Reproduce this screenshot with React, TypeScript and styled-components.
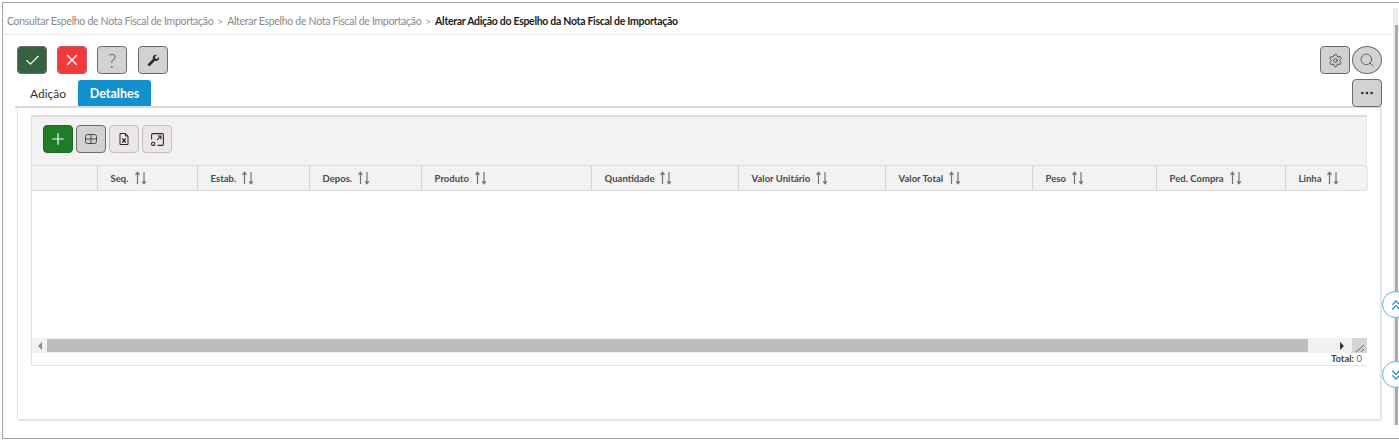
import React from "react";
import styled, { createGlobalStyle } from "styled-components";
import { Check, ChevronsDown, ChevronsUp, Ellipsis, Plus, Search, Settings, X } from "lucide-react";

const GlobalStyle = createGlobalStyle`
    html, body {
        margin: 0;
        padding: 0;
        background: #fff;
        overflow: hidden;
    }
    * {
        box-sizing: border-box;
    }
`;

interface Column {
    label: string;
    width: number;
}

const columns: Column[] = [
    { label: "", width: 66 },
    { label: "Seq.", width: 100 },
    { label: "Estab.", width: 112 },
    { label: "Depos.", width: 112 },
    { label: "Produto", width: 170 },
    { label: "Quantidade", width: 147 },
    { label: "Valor Unitário", width: 147 },
    { label: "Valor Total", width: 147 },
    { label: "Peso", width: 124 },
    { label: "Ped. Compra", width: 129 },
    { label: "Linha", width: 82 },
];

const SortIcon = () => (
    <svg width="13" height="14" viewBox="0 0 13 14" fill="none" stroke="#6f7378" strokeWidth="1.2">
        <path d="M3.500 13V1.500M1.500 3.800L3.500 1.200L5.500 3.800" />
        <path d="M10 1V12.500M8.200 10.300L10 12.800L11.800 10.300" />
    </svg>
);

const WrenchIcon = () => (
    <svg width="13" height="13" viewBox="0 0 14 14" fill="#2f2f2f">
        <path d="M12.800 3.200L10.600 5.300L8.900 4.900L8.500 3.300L10.700 1.100C9.200 .6 7.600 1 6.800 2.100C6.100 3 6 4.200 6.400 5.300L1.300 10.500C.7 11.100 .7 12 1.300 12.600C1.900 13.200 2.800 13.200 3.400 12.600L8.500 7.400C9.700 7.900 11 7.700 12 6.800C12.900 5.900 13.200 4.500 12.800 3.200Z" />
    </svg>
);

const GridIcon = () => (
    <svg width="14" height="14" viewBox="0 0 14 14" fill="none" stroke="#4a4a4a" strokeWidth="1">
        <rect x="1.500" y="2.500" width="11" height="9" rx="2" />
        <path d="M7 2.500V11.500M1.500 7H12.500" />
    </svg>
);

const ExcelIcon = () => (
    <svg width="14" height="14" viewBox="0 0 14 14" fill="none" stroke="#2a2a2a" strokeWidth="1">
        <path d="M3 1.500H8.500L11 4V12.500H3Z" />
        <path d="M8.500 1.500V4H11" />
        <path d="M5.300 6.500L8.700 10.500M8.700 6.500L5.300 10.500" strokeWidth="1.200" />
    </svg>
);

const ExpandIcon = () => (
    <svg width="15" height="15" viewBox="0 0 14 14" fill="none" stroke="#2a2a2a" strokeWidth="1">
        <path d="M1.500 7V2.500C1.500 1.900 1.900 1.500 2.500 1.500H11.500C12.100 1.500 12.500 1.900 12.500 2.500V11.500C12.500 12.100 12.100 12.500 11.500 12.500H7" />
        <path d="M6.500 7.500L10 4M7.300 3.800H10.200V6.700" />
        <rect x="1.500" y="9.500" width="3" height="3" rx="1" />
    </svg>
);

const App: React.FC = () => {
    return (
        <>
            <GlobalStyle />
            <Frame>
                <Breadcrumb>
                    <Crumb>Consultar Espelho de Nota Fiscal de Importação</Crumb>
                    <Separator>&gt;</Separator>
                    <Crumb>Alterar Espelho de Nota Fiscal de Importação</Crumb>
                    <Separator>&gt;</Separator>
                    <Crumb $current>Alterar Adição do Espelho da Nota Fiscal de Importação</Crumb>
                </Breadcrumb>
                <Content>
                    <ActionBar>
                        <ActionGroup>
                            <ActionButton $variant="confirm"><Check size={17} strokeWidth={1.6} /></ActionButton>
                            <ActionButton $variant="cancel"><X size={18} strokeWidth={1.8} /></ActionButton>
                            <ActionButton><HelpMark>?</HelpMark></ActionButton>
                            <WrenchButton><WrenchIcon /></WrenchButton>
                        </ActionGroup>
                        <RightGroup>
                            <ActionButton><Settings size={15} strokeWidth={1.4} color="#3c3c3c" /></ActionButton>
                            <RoundButton><Search size={16} strokeWidth={1.3} color="#4a5560" /></RoundButton>
                        </RightGroup>
                    </ActionBar>
                    <TabRow>
                        <Tab>Adição</Tab>
                        <Tab $active>Detalhes</Tab>
                        <MoreButton><Ellipsis size={16} strokeWidth={2} color="#333" /></MoreButton>
                    </TabRow>
                    <Panel>
                        <GridCard>
                            <GridToolbar>
                                <ToolButton $variant="add"><Plus size={18} strokeWidth={1.6} /></ToolButton>
                                <ToolButton $variant="selected"><GridIcon /></ToolButton>
                                <ToolButton><ExcelIcon /></ToolButton>
                                <ToolButton><ExpandIcon /></ToolButton>
                            </GridToolbar>
                            <HeaderRow>
                                {columns.map((column, index) => (
                                    <HeaderCell key={index} $width={column.width}>
                                        {column.label && (
                                            <>
                                                <span>{column.label}</span>
                                                <SortIcon />
                                            </>
                                        )}
                                    </HeaderCell>
                                ))}
                            </HeaderRow>
                            <GridBody />
                            <HScroll>
                                <ScrollArrow><LeftTriangle /></ScrollArrow>
                                <ScrollThumb />
                                <ScrollArrow $end><RightTriangle /></ScrollArrow>
                                <ResizeCorner>
                                    <svg width="14" height="14" viewBox="0 0 14 14" stroke="#666" strokeWidth="1" fill="none">
                                        <path d="M4 12L12 5M9 12L12 9" />
                                    </svg>
                                </ResizeCorner>
                            </HScroll>
                            <GridFooter>
                                <strong>Total:</strong>&nbsp;0
                            </GridFooter>
                        </GridCard>
                    </Panel>
                </Content>
                <PageScroll>
                    <PageThumb />
                </PageScroll>
                <SideButton $top={288}><ChevronsUp size={16} strokeWidth={1.8} /></SideButton>
                <SideButton $top={358}><ChevronsDown size={16} strokeWidth={1.8} /></SideButton>
            </Frame>
        </>
    );
};

const Frame = styled.div`
    position: relative;
    margin: 2px 0 0 2px;
    height: 437px;
    width: 1397px;
    padding-right: 7px;
    border-top: 1px solid #a3a3a3;
    border-left: 1px solid #a3a3a3;
    border-bottom: 1px solid #a3a3a3;
    font-family: Lato, "Liberation Sans", sans-serif;
    overflow: hidden;
`;

const Breadcrumb = styled.div`
    display: flex;
    align-items: center;
    gap: 4px;
    height: 32px;
    padding: 5px 0 0 4px;
    border-bottom: 1px solid #e8e8e8;
`;

const Crumb = styled.span<{ $current?: boolean }>`
    font-size: 10.500px;
    letter-spacing: -0.300px;
    color: ${(p) => (p.$current ? "#1c1c1c" : "#8a8a8a")};
    font-weight: ${(p) => (p.$current ? 700 : 400)};
`;

const Separator = styled.span`
    font-size: 10px;
    color: #8a8a8a;
`;

const Content = styled.div`
    padding: 11px 11px 0 12px;
`;

const ActionBar = styled.div`
    display: flex;
    justify-content: space-between;
    padding: 0 0 0 2px;
    margin-right: -1px;
`;

const ActionGroup = styled.div`
    display: flex;
    gap: 10px;
`;

const RightGroup = styled.div`
    display: flex;
    gap: 2px;
`;

const ActionButton = styled.div<{ $variant?: "confirm" | "cancel" }>`
    display: flex;
    align-items: center;
    justify-content: center;
    width: 30px;
    height: 28px;
    border-radius: 4px;
    border: 1px solid ${(p) => (p.$variant === "cancel" ? "#c9585a" : "#6e6e6e")};
    color: #fff;
    background: ${(p) =>
        p.$variant === "confirm" ? "#35623e" : p.$variant === "cancel" ? "#f2393d" : "#d2d2d2"};
`;

const WrenchButton = styled(ActionButton)`
    margin-left: 1px;
`;

const HelpMark = styled.span`
    font-size: 19px;
    font-weight: 300;
    color: #5e5e5e;
    line-height: 1;
`;

const RoundButton = styled(ActionButton)`
    border-radius: 50%;
`;

const TabRow = styled.div`
    position: relative;
    display: flex;
    align-items: flex-end;
    height: 34px;
    margin-right: -1px;
    border-bottom: 2px solid #d9d9d9;
`;

const Tab = styled.div<{ $active?: boolean }>`
    display: flex;
    align-items: center;
    justify-content: center;
    height: 26px;
    margin-left: ${(p) => (p.$active ? "0" : "3px")};
    width: ${(p) => (p.$active ? "73px" : "60px")};
    font-size: ${(p) => (p.$active ? "12.500px" : "12px")};
    border-radius: 3px 3px 0 0;
    font-weight: ${(p) => (p.$active ? 700 : 400)};
    color: ${(p) => (p.$active ? "#fff" : "#333")};
    background: ${(p) => (p.$active ? "#1291cd" : "transparent")};
`;

const MoreButton = styled(ActionButton)`
    position: absolute;
    right: 0;
    top: 5px;
`;

const Panel = styled.div`
    height: 313px;
    padding: 7px 14px 0 13px;
    margin-left: 2px;
    margin-right: -1px;
    border: 1px solid #e4e4e4;
    border-top: none;
    border-radius: 0 0 3px 3px;
    border-width: 0 2px 2px 1px;
`;

const GridCard = styled.div`
    width: 1336px;
    height: 251px;
    border: 1px solid #e4e4e4;
    border-top: 2px solid #dcdcdc;
    border-right-width: 0;
    display: flex;
    flex-direction: column;
`;

const GridToolbar = styled.div`
    display: flex;
    align-items: center;
    gap: 3px;
    height: 49px;
    padding: 0 0 4px 11px;
    background: #f2f2f2;
    border-bottom: 1px solid #dcdcdc;
    border-right: 1px solid #e4e4e4;
`;

const ToolButton = styled.div<{ $variant?: "add" | "selected" }>`
    display: flex;
    align-items: center;
    justify-content: center;
    width: 30px;
    height: 28px;
    border-radius: 4px;
    color: #fff;
    border: 1px solid
        ${(p) => (p.$variant === "add" ? "#1f6b1f" : p.$variant === "selected" ? "#6e6e6e" : "#c4c0c0")};
    background: ${(p) =>
        p.$variant === "add" ? "#1f7d27" : p.$variant === "selected" ? "#d2d2d2" : "#ece6e6"};
`;

const HeaderRow = styled.div`
    display: flex;
    height: 25px;
    background: #f2f2f2;
    border-bottom: 1px solid #dcdcdc;
`;

const HeaderCell = styled.div<{ $width: number }>`
    display: flex;
    align-items: center;
    gap: 5px;
    flex: 0 0 ${(p) => p.$width}px;
    padding-left: 12.600px;
    border-right: 1px solid #d4d4d4;
    font-size: 9.500px;
    font-weight: 700;
    color: #4a4a4a;

    &:last-child {
        border-right: 1px solid #e4e4e4;
    }
`;

const GridBody = styled.div`
    flex: 1;
    background: #fff;
`;

const HScroll = styled.div`
    display: flex;
    align-items: center;
    height: 15px;
    background: #f1f1f1;
`;

const ScrollArrow = styled.div<{ $end?: boolean }>`
    display: flex;
    align-items: center;
    justify-content: center;
    flex: 0 0 ${(p) => (p.$end ? "44px" : "15px")};
    height: 15px;
    padding-left: ${(p) => (p.$end ? "23px" : "0")};
`;

const ScrollThumb = styled.div`
    flex: 1;
    height: 13px;
    background: #bdbdbd;
`;

const LeftTriangle = styled.div`
    width: 0;
    height: 0;
    border-top: 4px solid transparent;
    border-bottom: 4px solid transparent;
    border-right: 4px solid #8c8c8c;
`;

const RightTriangle = styled.div`
    width: 0;
    height: 0;
    border-top: 4px solid transparent;
    border-bottom: 4px solid transparent;
    border-left: 4px solid #333;
`;

const ResizeCorner = styled.div`
    flex: 0 0 15px;
    height: 15px;
    background: #d4d4d4;
`;

const GridFooter = styled.div`
    height: 12px;
    display: flex;
    align-items: center;
    justify-content: flex-end;
    padding-right: 5px;
    font-size: 9.500px;
    line-height: 12px;
    color: #666;

    strong {
        font-weight: 700;
        color: #444;
    }
`;

const SideButton = styled.div<{ $top: number }>`
    position: absolute;
    left: 1379px;
    top: ${(p) => p.$top}px;
    display: flex;
    align-items: center;
    padding-left: 5px;
    width: 27px;
    height: 27px;
    border-radius: 50%;
    border: 1px solid #5db3dd;
    background: #fff;
    color: #1a86c8;
`;

const PageScroll = styled.div`
    position: absolute;
    right: 1px;
    top: 5px;
    width: 5px;
    height: 417px;
    background: #ececec;
`;

const PageThumb = styled.div`
    margin: 17px 0 0 2px;
    height: 400px;
    background: #a9a9a9;
`;

export default App;
